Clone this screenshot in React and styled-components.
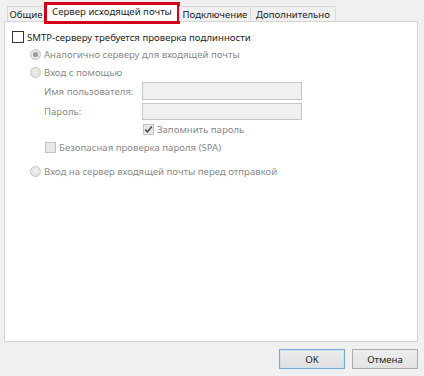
import React from 'react';
import styled, { createGlobalStyle } from 'styled-components';

const Global = createGlobalStyle`
  html, body { margin: 0; padding: 0; background: #f0f0f0; }
  body { font-family: "Noto Sans", "Open Sans", sans-serif; }
`;

const FONT = `"Noto Sans", "Open Sans", "DejaVu Sans", sans-serif`;

const Window = styled.div`
  width: 424px;
  height: 376px;
  box-sizing: border-box;
  background: #f0f0f0;
  padding: 2px 6px 0 4px;
  display: flex;
  flex-direction: column;
  font-family: ${FONT};
  font-size: 9.6px;
  color: #1e1e1e;
`;

const TabStrip = styled.div`
  display: flex;
  align-items: flex-end;
  height: 20px;
  padding-left: 3px;
  margin-bottom: -1px;
  position: relative;
  z-index: 1;
`;

const Tab = styled.div`
  box-sizing: border-box;
  position: relative;
  display: flex;
  align-items: center;
  justify-content: center;
  width: ${p => p.$w}px;
  height: ${p => (p.$active ? 20 : 15)}px;
  margin-bottom: ${p => (p.$active ? 0 : 1)}px;
  border: 1px solid #d9d9d9;
  border-bottom: none;
  margin-left: ${p => (p.$first ? 0 : -1)}px;
  background: ${p => (p.$active ? '#ffffff' : '#f0f0f0')};
  white-space: nowrap;
  color: #1e1e1e;
  padding-bottom: ${p => (p.$active ? 2 : 0)}px;
  ${p =>
    p.$highlight &&
    `&::after {
      content: '';
      position: absolute;
      left: -1px; right: -1px; top: -1px; bottom: -2px;
      border: 3px solid #d3001c;
      pointer-events: none;
    }`}
`;

const Panel = styled.div`
  box-sizing: border-box;
  height: 321px;
  background: #ffffff;
  border: 1px solid #d4d4d4;
  display: flex;
  flex-direction: column;
  padding-top: 7px;
`;

const Row = styled.div`
  display: flex;
  align-items: center;
  height: ${p => p.$h || 16}px;
  margin-top: ${p => p.$mt || 0}px;
  padding-left: ${p => p.$indent || 0}px;
  color: ${p => (p.$disabled ? '#8a8a8a' : '#1e1e1e')};
  white-space: nowrap;
`;

const Label = styled.span`
  margin-left: ${p => p.$gap || 3}px;
`;

const FieldLabel = styled.span`
  width: 98px;
  flex: none;
`;

const CheckBox = styled.span`
  box-sizing: border-box;
  flex: none;
  width: ${p => p.$size}px;
  height: ${p => p.$size}px;
  border: 1px solid ${p => (p.$disabled ? '#c2c2c2' : '#333333')};
  background: ${p => (p.$disabled ? '#e8e8e8' : '#ffffff')};
  display: flex;
  align-items: center;
  justify-content: center;
`;

const Radio = styled.span`
  box-sizing: border-box;
  flex: none;
  width: 11px;
  height: 11px;
  border-radius: 50%;
  border: 1px solid #c6c6c6;
  background: radial-gradient(circle at 50% 40%, #eeeeee 0%, #dedede 100%);
  display: flex;
  align-items: center;
  justify-content: center;
  &::after {
    content: '';
    display: ${p => (p.$checked ? 'block' : 'none')};
    width: 5px;
    height: 5px;
    border-radius: 50%;
    background: #9b9b9b;
  }
`;

const TextInput = styled.div`
  box-sizing: border-box;
  width: 160px;
  height: ${p => p.$h}px;
  border: 1px solid #c5c5c5;
  background: #f0f0f0;
`;

const Footer = styled.div`
  display: flex;
  justify-content: flex-end;
  gap: 7px;
  margin-top: 7px;
`;

const Button = styled.button`
  box-sizing: border-box;
  width: 66px;
  height: 20px;
  padding: 0;
  font-family: ${FONT};
  font-size: 9.6px;
  color: #1e1e1e;
  border: 1px solid ${p => (p.$default ? '#78a9d8' : '#acacac')};
  background: ${p => (p.$default ? 'linear-gradient(#ececec, #e0e0e0)' : 'linear-gradient(#ededed, #e2e2e2)')};
  box-shadow: ${p => (p.$default ? 'inset 0 0 0 1px #cfe0f0' : 'none')};
  display: flex;
  align-items: center;
  justify-content: center;
`;

const Check = () => (
  <svg width="9" height="9" viewBox="0 0 9 9">
    <path d="M1.3 4.6 L3.5 6.9 L7.8 1.6" fill="none" stroke="#4a4a4a" strokeWidth="1.6" />
  </svg>
);

export default function App() {
  return (
    <Window>
      <Global />
      <TabStrip>
        <Tab $first $w={38}>Общие</Tab>
        <Tab $active $highlight $w={136}>Сервер исходящей почты</Tab>
        <Tab $w={72}>Подключение</Tab>
        <Tab $w={86}>Дополнительно</Tab>
      </TabStrip>
      <Panel>
        <Row $indent={7}>
          <CheckBox $size={12} />
          <Label>SMTP-серверу требуется проверка подлинности</Label>
        </Row>
        <Row $indent={25} $mt={1} $disabled>
          <Radio $checked />
          <Label>Аналогично серверу для входящей почты</Label>
        </Row>
        <Row $indent={25} $mt={2} $disabled>
          <Radio />
          <Label>Вход с помощью</Label>
        </Row>
        <Row $indent={39} $mt={2} $h={18} $disabled>
          <FieldLabel>Имя пользователя:</FieldLabel>
          <TextInput $h={18} />
        </Row>
        <Row $indent={39} $mt={3} $h={17} $disabled>
          <FieldLabel>Пароль:</FieldLabel>
          <TextInput $h={17} />
        </Row>
        <Row $indent={138} $mt={1} $disabled>
          <CheckBox $size={11} $disabled>
            <Check />
          </CheckBox>
          <Label>Запомнить пароль</Label>
        </Row>
        <Row $indent={40} $mt={2} $disabled>
          <CheckBox $size={11} $disabled />
          <Label>Безопасная проверка пароля (SPA)</Label>
        </Row>
        <Row $indent={25} $mt={8} $disabled>
          <Radio />
          <Label>Вход на сервер входящей почты перед отправкой</Label>
        </Row>
      </Panel>
      <Footer>
        <Button $default>OK</Button>
        <Button>Отмена</Button>
      </Footer>
    </Window>
  );
}
